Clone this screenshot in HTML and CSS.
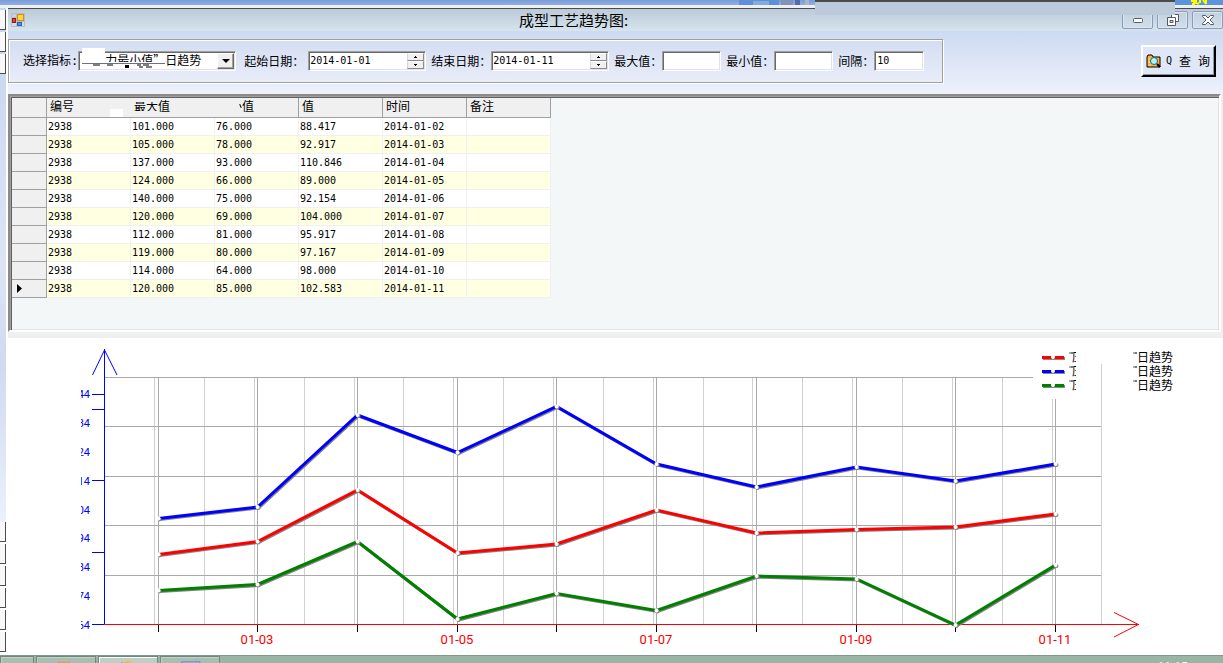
FILE: index.html
```html
<!DOCTYPE html>
<html lang="zh-CN">
<head>
<meta charset="utf-8">
<title>成型工艺趋势图</title>
<link rel="stylesheet" href="styles.css">
</head>
<body>
<div class="desktop">
  <div class="backdrop">
    <svg class="backdrop-art" width="76" height="5" viewBox="0 0 76 5" aria-hidden="true">
      <rect x="0" y="0" width="40" height="5" fill="#5f8fd8"/><rect x="14" y="1" width="16" height="4" fill="#86acd9"/>
      <rect x="42" y="0" width="12" height="5" fill="#7f95b8"/><rect x="56" y="0" width="5" height="5" fill="#536ca8"/><rect x="66" y="0" width="4" height="5" fill="#a8b6cc"/>
    </svg>
    <svg class="backdrop-logo" width="48" height="5" viewBox="0 0 48 5" aria-hidden="true">
      <path d="M16 1h6M18 3h4M17 4h3M25 0v3M28 0l3 4M24 3l-2 1M31 0v4" stroke="#ffff00" stroke-width="2" fill="none"/>
    </svg>
  </div>
  <div class="title-flap"></div>

  <div class="workspace">
    <aside class="dock">
      <div class="dock-group"><i class="tab"></i><i class="tab"></i><i class="tab"></i></div>
      <div class="dock-group"><i class="tab"></i><i class="tab"></i><i class="tab"></i><i class="tab"></i><i class="tab"></i><i class="tab"></i></div>
    </aside>

    <main class="window">
      <header class="titlebar">
        <svg class="app-icon" width="14" height="14" viewBox="0 0 14 14" aria-hidden="true">
          <path d="M.5.5h13v13H.5zM5.5.5v13M.5 4.500h5M5.5 8.500h8" fill="none" stroke="#b9bcc0"/>
          <rect x="1.500" y="5.500" width="3" height="4" fill="#e0453a" stroke="#a01410"/>
          <rect x="6.500" y="1.500" width="6" height="6" fill="#ffd540" stroke="#c8901a"/>
          <rect x="6.500" y="9.500" width="4" height="3" fill="#4f8be8" stroke="#2a61c0"/>
        </svg>
        <h1 class="title">成型工艺趋势图:</h1>
        <div class="controls">
          <button class="control" aria-label="最小化"><svg width="12" height="12" viewBox="0 0 12 12"><rect x="1.500" y="4.500" width="9" height="4" rx="1" fill="#fff" stroke="#55596a"/></svg></button>
          <button class="control" aria-label="还原"><svg width="12" height="12" viewBox="0 0 12 12"><path d="M4.500 3V.5h7v7H9" fill="#fff" stroke="#55596a"/><path d="M.5 3.500h8v8h-8z" fill="#fff" stroke="#55596a"/><path d="M3 6.500h3v2H3z" fill="#c7d3e3" stroke="#55596a"/></svg></button>
          <button class="control" aria-label="关闭"><svg width="12" height="12" viewBox="0 0 12 12"><path d="M.5 1.500h3L6 4l2.500-2.500h3v1L8 6l3.500 3.500v1h-3L6 8l-2.500 2.500h-3v-1L4 6 .5 2.500z" fill="#fff" stroke="#55596a"/></svg></button>
        </div>
      </header>

      <form class="toolbar">
        <div class="filters">
          <div class="field field-metric">
            <label for="metric">选择指标:</label>
            <div class="select-box">
              <select id="metric"><option>力最小值”日趋势</option></select>
              <span class="drop"><svg width="8" height="4" viewBox="0 0 8 4"><path d="M0 0h8L4 4z"/></svg></span>
              <svg class="scratch" width="84" height="22" viewBox="0 0 84 22" aria-hidden="true">
                <rect width="23" height="9" fill="#fff"/><rect y="14" width="83" height="6" fill="#fff"/>
                <path d="M0 15.500h83" stroke="#6b6f88"/>
                <path d="M11 17h7M25 17h6M55 17h4M61 17h6M57 19h4M64 19h6" stroke="#000"/><rect x="43" y="17" width="4" height="3"/>
              </svg>
            </div>
          </div>
          <div class="field field-start">
            <label for="start">起始日期：</label>
            <div class="date-box"><input id="start" type="text" value="2014-01-01"><span class="spin"><button type="button" aria-label="加一天"><svg width="3" height="2" viewBox="0 0 3 2"><path d="M1 0h1v1h1v1H0V1h1z"/></svg></button><button type="button" aria-label="减一天"><svg width="3" height="2" viewBox="0 0 3 2"><path d="M0 0h3v1H2v1H1V1H0z"/></svg></button></span></div>
          </div>
          <div class="field">
            <label for="end">结束日期：</label>
            <div class="date-box"><input id="end" type="text" value="2014-01-11"><span class="spin"><button type="button" aria-label="加一天"><svg width="3" height="2" viewBox="0 0 3 2"><path d="M1 0h1v1h1v1H0V1h1z"/></svg></button><button type="button" aria-label="减一天"><svg width="3" height="2" viewBox="0 0 3 2"><path d="M0 0h3v1H2v1H1V1H0z"/></svg></button></span></div>
          </div>
          <div class="field"><label for="max">最大值：</label><input class="box" id="max" type="text"></div>
          <div class="field"><label for="min">最小值：</label><input class="box" id="min" type="text"></div>
          <div class="field"><label for="step">间隔：</label><input class="box box-short" id="step" type="text" value="10"></div>
        </div>
        <button class="query" type="button">
          <svg width="16" height="14" viewBox="0 0 16 14" aria-hidden="true">
            <path d="M1 13V3l1-2h4l1 2h7v10z" fill="#f7b24a" stroke="#000"/>
            <path d="M2 5h2M2 8h2M3 11h2" stroke="#ffe0a0"/>
            <circle cx="8" cy="7" r="3.500" fill="#aef4f4" stroke="#10706e"/><path d="M7 6l1-1" stroke="#fff"/>
            <path d="M11 10l3 3" stroke="#000" stroke-width="2"/>
          </svg>
          <span class="query-key">Q</span><span>查</span><span>询</span>
        </button>
      </form>

      <section class="grid-panel">
        <table class="grid">
          <thead><tr><th class="stub"></th><th class="first">编号</th><th class="worn">最大值</th><th class="worn-more">值</th><th>值</th><th>时间</th><th>备注</th></tr></thead>
          <tbody>
            <tr><th></th><td>2938</td><td>101.000</td><td>76.000</td><td>88.417</td><td>2014-01-02</td><td></td></tr>
            <tr><th></th><td>2938</td><td>105.000</td><td>78.000</td><td>92.917</td><td>2014-01-03</td><td></td></tr>
            <tr><th></th><td>2938</td><td>137.000</td><td>93.000</td><td>110.846</td><td>2014-01-04</td><td></td></tr>
            <tr><th></th><td>2938</td><td>124.000</td><td>66.000</td><td>89.000</td><td>2014-01-05</td><td></td></tr>
            <tr><th></th><td>2938</td><td>140.000</td><td>75.000</td><td>92.154</td><td>2014-01-06</td><td></td></tr>
            <tr><th></th><td>2938</td><td>120.000</td><td>69.000</td><td>104.000</td><td>2014-01-07</td><td></td></tr>
            <tr><th></th><td>2938</td><td>112.000</td><td>81.000</td><td>95.917</td><td>2014-01-08</td><td></td></tr>
            <tr><th></th><td>2938</td><td>119.000</td><td>80.000</td><td>97.167</td><td>2014-01-09</td><td></td></tr>
            <tr><th></th><td>2938</td><td>114.000</td><td>64.000</td><td>98.000</td><td>2014-01-10</td><td></td></tr>
            <tr><th><svg class="current" width="5" height="9" viewBox="0 0 5 9"><path d="M0 0l5 4.500L0 9z"/></svg></th><td>2938</td><td>120.000</td><td>85.000</td><td>102.583</td><td>2014-01-11</td><td></td></tr>
          </tbody>
        </table>
      </section>

      <section class="chart">
        <svg class="plot" viewBox="8 338 1215 317" role="img" aria-label="日趋势">
          <path class="grid-minor" d="M154.500 377V624M204.500 377V624M254.500 377V624M304.500 377V624M354.500 377V624M403.500 377V624M453.500 377V624M503.500 377V624M553.500 377V624M603.500 377V624M653.500 377V624M703.500 377V624M752.500 377V624M802.500 377V624M852.500 377V624M902.500 377V624M952.500 377V624M1002.500 377V624M1052.500 399V624M1101.500 364V624"/>
          <path class="grid-major" d="M105 377.500H1033M105 426.500H1101M105 476.500H1101M105 525.500H1101M105 575.500H1101M158.500 377V624M257.500 377V624M357.500 377V624M457.500 377V624M556.500 377V624M656.500 377V624M756.500 377V624M856.500 377V624M955.500 377V624M1055.500 399V624"/>
          <path class="axis-y" d="M104.500 349V625M92 394.500h12M92 409.500h12M92 480.500h12M92 552.500h12M92 624.500h12"/><path class="arrow-y" d="M92.500 375L104.500 350L117 375"/>
          <path class="ticks" d="M158.500 625v7M257.500 625v7M357.500 625v7M457.500 625v7M556.500 625v7M656.500 625v7M756.500 625v7M856.500 625v7M955.500 625v7M1055.500 625v7"/>
          <rect class="axis-x" x="104" y="624" width="1035" height="1"/><path class="arrow-x" d="M1114 612.500L1138.500 624.500L1114 637"/>

          <defs>
            <marker id="dot" markerWidth="7" markerHeight="7" refX="3" refY="3" markerUnits="userSpaceOnUse"><circle cx="4" cy="4" r="2" fill="#888"/><circle cx="3" cy="3" r="2" fill="#fff"/></marker>
            <polyline id="mean" points="158.500,554.500 257.500,541.500 357.500,490 457.500,553 556.500,544 656.500,510 756.500,533 856.500,529.500 955.500,527 1055.500,514"/>
            <polyline id="high" points="158.500,518.500 257.500,507 357.500,415 457.500,452.500 556.500,406.500 656.500,464 756.500,487 856.500,467 955.500,481 1055.500,464"/>
            <polyline id="low" points="158.500,590.500 257.500,584.500 357.500,541.500 457.500,619 556.500,593.500 656.500,610.500 756.500,576 856.500,579 955.500,625 1055.500,565"/>
            <clipPath id="y-clip"><rect x="81" y="380" width="12" height="260"/></clipPath>
            <clipPath id="key-clip"><rect x="1066" y="346" width="10" height="50"/></clipPath>
          </defs>
          <g class="shadow" transform="translate(1 1)"><use href="#mean"/><use href="#high"/><use href="#low"/></g>
          <g class="line"><use href="#mean" stroke="#ff0000"/><use href="#high" stroke="#0000ff"/><use href="#low" stroke="#008000"/></g>

          <g class="y-labels" clip-path="url(#y-clip)">
            <text x="90" y="398">44</text><text x="90" y="427">34</text><text x="90" y="456">24</text><text x="90" y="485">14</text><text x="90" y="514">04</text><text x="90" y="542">94</text><text x="90" y="571">84</text><text x="90" y="600">74</text><text x="90" y="629">64</text>
          </g>
          <g class="x-labels"><text x="257" y="644">01-03</text><text x="457" y="644">01-05</text><text x="656" y="644">01-07</text><text x="856" y="644">01-09</text><text x="1055" y="644">01-11</text></g>

          <path d="M1043 358.500h22M1043 372.500h22M1043 386.500h22" stroke="#888" stroke-width="3"/>
          <g stroke-width="3"><path d="M1042 357.500h22" stroke="#ff0000"/><path d="M1042 371.500h22" stroke="#0000ff"/><path d="M1042 385.500h22" stroke="#008000"/></g>
          <g fill="#fff"><circle cx="1053" cy="357" r="2"/><circle cx="1053" cy="371" r="2"/><circle cx="1053" cy="385" r="2"/></g>
          <g class="legend" clip-path="url(#key-clip)"><text x="1072" y="362">压</text><text x="1072" y="376">压</text><text x="1072" y="390">压</text></g>
          <g class="legend"><text x="1137" y="362">日趋势</text><text x="1137" y="376">日趋势</text><text x="1137" y="390">日趋势</text></g>
          <path d="M1069 353h2M1069 367h2M1069 381h2M1133 353h2M1133 367h2M1133 381h2" stroke="#c8a888" stroke-width="2"/>
          <path d="M1071 353h2M1071 367h2M1071 381h2M1135 353h2M1135 367h2M1135 381h2" stroke="#3c8cb8" stroke-width="2"/>
        </svg>
      </section>
    </main>
  </div>

  <footer class="taskbar">
    <button class="task task-start" aria-label="开始"></button>
    <button class="task" aria-label="窗口一"><svg width="20" height="3" viewBox="0 0 20 3"><path d="M0 3l2-2h12l1 2z" fill="#c9a54e"/></svg></button>
    <button class="task task-active" aria-label="窗口二"><svg width="22" height="4" viewBox="0 0 22 4"><path d="M2 4l3-3 4 3z" fill="#4fa9dc"/><path d="M5 4l3-3 4-1 4 3 4 1z" fill="#f7b733"/></svg></button>
    <button class="task" aria-label="窗口三"><svg width="24" height="4" viewBox="0 0 24 4"><path d="M1 4l3-3h18v3" fill="#dfe8fa" stroke="#5670b8"/></svg></button>
    <time class="clock">11:15</time>
  </footer>
</div>
</body>
</html>
```
FILE: styles.css
```css
* { box-sizing: border-box; }
body { margin: 0; background: #fff; color: #000; font: 12px/16px "DejaVu Sans Mono", "Noto Sans CJK SC", monospace; }
button, input, select { font: inherit; color: inherit; border-radius: 0; margin: 0; padding: 0; }
svg { display: block; flex: none; }

.desktop { position: relative; display: flex; flex-direction: column; min-height: 100vh; }
.backdrop { display: flex; justify-content: flex-end; gap: 360px; height: 8px; background: linear-gradient(#799bda, #8fb0e4); border-bottom: 3px solid #efefef; }
.backdrop-logo { background: #5b94dc; }
.title-flap { position: absolute; top: 0; right: 48px; width: 360px; height: 15px; background: #bccad9; border-top: 2px solid #4b4b4b; }

.workspace { flex: 1; display: flex; }
.dock { width: 8px; display: flex; flex-direction: column; justify-content: space-between; padding: 2px 0 3px; border-right: 2px solid #fff; background: linear-gradient(#c5d5ef, #dbe5f5 40%, #cddaf0 55%, #ecf1fc 80%, #fff 81%); }
.dock-group { display: flex; flex-direction: column; gap: 2px; }
.tab { height: 20px; background: #f8f8f8; border: solid #4d4d4d; border-width: 0 1px 1px 0; }

.window { flex: 1; min-width: 0; display: flex; flex-direction: column; background: #f0f0f0; }
.titlebar { display: flex; align-items: center; height: 23px; padding-left: 3px; border-top: 1px solid #4b4b4b; background: linear-gradient(#bccad9, #d6e4ee); }
.title { flex: 1; margin: 0; text-align: center; font: 15px/20px "Noto Sans CJK SC", sans-serif; }
.controls { display: flex; gap: 4px; }
.control { display: flex; align-items: center; justify-content: center; width: 31px; height: 18px; border: 1px solid #8b9cb8; border-radius: 2px; background: linear-gradient(#c3d0df, #d2dfeb); box-shadow: inset 0 0 0 1px #dbe5f0; }

.toolbar { display: flex; align-items: center; justify-content: space-between; padding: 8px 7px 10px 0; background: linear-gradient(#cedaf1, #edf1fc); }
.filters { display: flex; align-items: center; gap: 5px; height: 44px; padding: 0 18px 0 14px; border: 1px solid #a0a0a0; box-shadow: inset 1px 1px #fff, 1px 1px #fff; background: linear-gradient(#d3ddf1, #e9edf9); }
.field { display: flex; align-items: center; white-space: nowrap; }
.field label { font-family: "Noto Sans CJK SC", sans-serif; }
.field-metric { margin-right: 3px; }
.field-metric label { font-family: "DejaVu Sans Mono", "Noto Sans CJK SC", monospace; }
.field-start label { margin-right: 4px; }
.select-box, .date-box, .box { height: 20px; border: 1px solid; border-color: #a0a0a0 #fff #fff #a0a0a0; background: #fff; box-shadow: inset 1px 1px #696969, inset -1px -1px #e3e3e3; }
.select-box { position: relative; width: 158px; }
.select-box select { appearance: none; width: 100%; height: 16px; padding-left: 26px; border: 0; background: transparent; font: 12px/16px "Noto Sans CJK SC", sans-serif; }
.drop { position: absolute; top: 1px; right: 1px; display: flex; align-items: center; justify-content: center; width: 17px; height: 16px; pointer-events: none; background: #f0f0f0; border: 1px solid; border-color: #fff #696969 #696969 #fff; box-shadow: inset -1px -1px #a0a0a0; }
.scratch { position: absolute; top: -4px; left: 3px; pointer-events: none; }
.date-box { display: flex; width: 118px; padding: 1px; }
.date-box input { flex: 1; min-width: 0; border: 0; background: transparent; font-size: 10px; }
.spin { display: flex; flex-direction: column; width: 17px; }
.spin button { flex: 1; display: flex; align-items: center; justify-content: center; border: 1px solid; border-color: #fff #8a8a8a #8a8a8a #d8d8d8; background: #f0f0f0; }
.box { width: 59px; padding: 0 2px 2px; font-size: 10px; }
.box-short { width: 50px; }
.query { display: flex; align-items: center; gap: 4px; width: 75px; height: 32px; padding-left: 3px; border: 2px solid; border-color: #fff #000 #000 #fff; background: #e0e7f6; box-shadow: inset -1px -1px #8f96a5; font: 12px/16px "Noto Sans CJK SC", sans-serif; }
.query span + span { margin-left: 3px; }
.query-key { font: 10px/16px "DejaVu Sans Mono", monospace; }

.grid-panel { height: 238px; margin: 1px 2px 6px 0; border: 2px solid; border-color: #8a8a8a #fff #fff #8a8a8a; background: #f3f7f8; box-shadow: inset 1px 1px #a0a0a0, inset 2px 2px #606060, inset -1px -1px #e3e3e3; padding: 2px; }
.grid { table-layout: fixed; width: 539px; border-collapse: separate; border-spacing: 0; font-size: 10px; }
.grid th, .grid td { height: 18px; padding: 0 1px; line-height: 16px; text-align: left; font-weight: normal; white-space: nowrap; }
.grid td { background: #fff; border: solid #f0f0f0; border-width: 0 1px 1px 0; }
.grid tbody tr:nth-child(even) td { background: #ffffe1; }
.grid tbody th, .grid thead th { background: #f0f0f0; border-bottom: 1px solid #a0a0a0; }
.grid tbody th { border-right: 1px solid #a0a0a0; }
.grid thead th { position: relative; height: 20px; padding: 0 3px 3px; font: 12px/16px "Noto Sans CJK SC", sans-serif; box-shadow: inset -1px 0 #a0a0a0; }
.grid thead .stub { width: 35px; }
.grid thead .first::after { content: ""; position: absolute; right: 8px; bottom: 0; width: 13px; height: 8px; background: #fff; }
.grid thead .first, .grid thead .worn { box-shadow: none; }
.worn::before, .worn::after { content: ""; position: absolute; left: 2px; width: 25px; background: #f0f0f0; }
.worn::before { top: 0; height: 4px; }
.worn::after { bottom: 0; height: 6px; }
.grid thead .worn-more { padding-left: 27px; }
.worn-more::before { content: ""; position: absolute; left: 25px; top: 6px; width: 1px; height: 4px; background: #000; transform: rotate(-25deg); }
.current { margin-left: 4px; }

.chart { flex: 1; background: #fff; }
.plot { width: 100%; height: auto; }
.grid-minor, .grid-major, .axis-y, .arrow-x, .arrow-y, .ticks, .line, .shadow { fill: none; }
.grid-minor { stroke: #d0d0d0; }
.grid-major { stroke: #a9a9a9; }
.axis-x { fill: #ff0000; }
.arrow-x { stroke: #ff0000; }
.axis-y, .arrow-y { stroke: #0000ff; }
.ticks { stroke: #000; }
.line { stroke-width: 3; }
.line use { marker: url(#dot); }
.shadow { stroke: #808080; stroke-width: 3; }
.y-labels { font: 11px Roboto, sans-serif; fill: #0000ff; text-anchor: end; }
.x-labels { font: 13px Roboto, sans-serif; fill: #ff0000; text-anchor: middle; }
.legend { font: 12px "Noto Sans CJK SC", sans-serif; }

.taskbar { display: flex; gap: 2px; height: 8px; overflow: hidden; background: #9bb5a4; border-top: 1px solid #7f9a89; }
.task { display: flex; justify-content: center; align-items: flex-start; width: 60px; height: 20px; padding-top: 4px; border: 1px solid #6e8a79; background: #a9beb0; box-shadow: inset 1px 1px #c2d2c8; }
.task-start { width: 34px; }
.task-active { background: #c0cfc5; box-shadow: inset 1px 1px #fff; }
.clock { margin: 3px 35px 0 auto; color: #fff; font: 12px/16px "Open Sans", sans-serif; }
```
